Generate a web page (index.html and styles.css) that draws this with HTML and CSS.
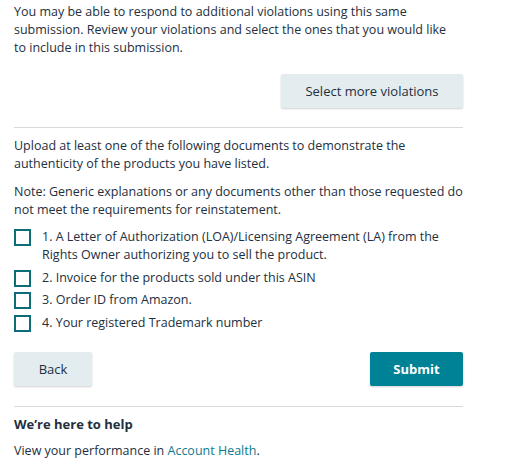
FILE: index.html
```html
<!DOCTYPE html>
<html>
<head>
<meta charset="utf-8">
<link rel="stylesheet" href="styles.css">
</head>
<body>
<div class="page">
  <p class="text intro">You may be able to respond to additional violations using this same submission. Review your violations and select the ones that you would like to include in this submission.</p>
  <div class="right-row">
    <button class="btn secondary more">Select more violations</button>
  </div>
  <hr class="divider">
  <p class="text">Upload at least one of the following documents to demonstrate the authenticity of the products you have listed.</p>
  <p class="text note">Note: Generic explanations or any documents other than those requested do not meet the requirements for reinstatement.</p>
  <ul class="checks">
    <li><span class="box"></span><span class="label">1. A Letter of Authorization (LOA)/Licensing Agreement (LA) from the Rights Owner authorizing you to sell the product.</span></li>
    <li><span class="box"></span><span class="label">2. Invoice for the products sold under this ASIN</span></li>
    <li><span class="box"></span><span class="label">3. Order ID from Amazon.</span></li>
    <li><span class="box"></span><span class="label">4. Your registered Trademark number</span></li>
  </ul>
  <div class="actions">
    <button class="btn secondary back">Back</button>
    <button class="btn primary submit">Submit</button>
  </div>
  <hr class="divider">
  <h3 class="help-title">We’re here to help</h3>
  <p class="text help">View your performance in <a class="link" href="#">Account Health</a>.</p>
</div>
</body>
</html>
```

FILE: styles.css
```css
html, body {
  margin: 0;
  padding: 0;
  background: #ffffff;
}
body {
  font-family: "Open Sans", "Noto Sans", sans-serif;
  font-size: 12.5px;
  color: #232f3e;
}
.page {
  width: 449px;
  padding: 3px 0 0 14px;
}
.text {
  margin: 0;
  line-height: 18px;
}
.intro {
  max-width: 442px;
}
.right-row {
  display: flex;
  justify-content: flex-end;
  margin-top: 17px;
}
.btn {
  font-family: inherit;
  font-size: 13px;
  border: none;
  border-radius: 2px;
  height: 34px;
  cursor: pointer;
  box-shadow: 0 1px 2px rgba(0, 0, 0, 0.18);
}
.secondary {
  background: #e3ecee;
  color: #232f3e;
}
.more {
  width: 182px;
}
.divider {
  border: none;
  border-top: 1px solid #d5dbdb;
  margin: 19px 0 0 0;
}
.divider + .text {
  margin-top: 9px;
}
.note {
  margin-top: 10px;
}
.checks {
  list-style: none;
  padding: 0;
  margin: 9px 0 0 0;
}
.checks li {
  display: flex;
  align-items: flex-start;
  margin-bottom: 4.5px;
  line-height: 18px;
}
.box {
  flex: none;
  width: 13px;
  height: 13px;
  border: 2px solid #0c6c78;
  margin-top: 1px;
  margin-right: 11px;
  box-sizing: content-box;
}
.actions {
  display: flex;
  justify-content: space-between;
  margin-top: 20px;
}
.back {
  width: 78px;
}
.primary {
  background: #008296;
  color: #ffffff;
  font-weight: 700;
}
.submit {
  width: 93px;
}
.actions + .divider {
  margin-top: 20px;
}
.help-title {
  margin: 8px 0 0 0;
  font-size: 13px;
  font-weight: 700;
  line-height: 18px;
}
.help {
  margin-top: 9px;
}
.link {
  color: #0e7a8c;
  text-decoration: none;
}
```
